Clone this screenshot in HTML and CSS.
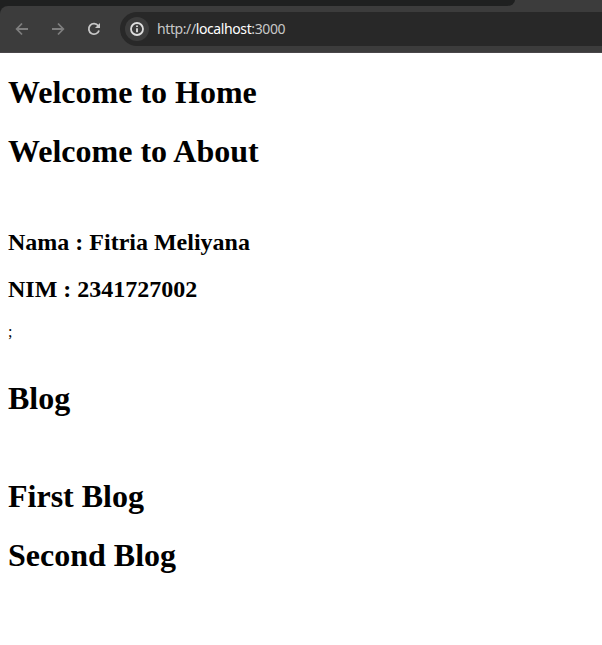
FILE: index.html
```html
<!DOCTYPE html>
<html lang="en">
<head>
<meta charset="utf-8">
<title>Home</title>
<link rel="stylesheet" href="styles.css">
</head>
<body>
<header class="browser">
  <div class="tabstrip"><div class="tabs"></div></div>
  <div class="toolbar">
    <svg class="icon dim" viewBox="0 0 16 16"><path d="M14 8H3M8 2.5L2.7 8L8 13.5"/></svg>
    <svg class="icon dim" viewBox="0 0 16 16"><path d="M2 8h11M8 2.5L13.3 8L8 13.5"/></svg>
    <svg class="icon reload" viewBox="0 0 16 16"><path d="M12.2 4.8A5.2 5.2 0 1 0 13 9.4"/><path class="tip" d="M14 2v5H9z"/></svg>
    <div class="address">
      <span class="info"><svg class="icon" viewBox="0 0 16 16"><circle cx="8" cy="8" r="6"/><path d="M8 7.2v4M8 4.5v1.5"/></svg></span>
      <span class="url">http://<b>localhost</b>:3000</span>
    </div>
  </div>
</header>
<main class="page">
  <h1>Welcome to Home</h1>
  <h1>Welcome to About</h1>
  <section class="profile">
    <h2>Nama : Fitria Meliyana</h2>
    <h2>NIM : 2341727002</h2>
    <p class="mark">;</p>
  </section>
  <h1 class="blog">Blog</h1>
  <section class="posts">
    <h1>First Blog</h1>
    <h1>Second Blog</h1>
  </section>
</main>
</body>
</html>
```
FILE: styles.css
```css
* { box-sizing: border-box; }
body { margin: 0; background: #fff; color: #000; font-family: "Liberation Serif", serif; }
.browser { height: 53px; background: linear-gradient(90deg, #1f2020 50%, #3c3c3c 50%); }
.tabstrip { height: 6px; background: #3c3c3c; }
.tabs { width: 515px; height: 6px; background: #1f2020; border-bottom-right-radius: 8px 6px; }
.toolbar { height: 47px; padding: 6px 0 6px 14px; display: flex; align-items: center; gap: 20px; background: #3c3c3c; border-top-left-radius: 8px; border-bottom: 1px solid #494649; }
.icon { width: 16px; height: 16px; flex: none; fill: none; stroke: #dedede; stroke-width: 1.8; }
.dim { stroke: #7e7e7e; }
.reload { stroke: #c7c7c7; }
.tip { fill: #c7c7c7; stroke: none; }
.address { flex: 1; height: 34px; margin-left: -2px; padding-left: 5px; display: flex; align-items: center; gap: 8px; background: #282828; border-radius: 17px 0 0 17px; }
.info { width: 24px; height: 24px; border-radius: 50%; background: #3c3c3c; display: flex; align-items: center; justify-content: center; }
.url { padding-bottom: 2px; color: #c7c7c7; font: 14px "Noto Sans", sans-serif; letter-spacing: -0.4px; }
.url b { color: #fff; font-weight: 400; }
.page { padding: 20px 8px 0; }
h1 { margin: 0 0 21px; font-size: 32px; line-height: 38px; }
h2 { margin: 0 0 20px; font-size: 24px; line-height: 27px; }
.profile { padding-top: 38px; }
.mark { margin: 0; font-size: 16px; line-height: 18px; }
.blog { margin-top: 38px; }
.posts { padding-top: 39px; }
```
